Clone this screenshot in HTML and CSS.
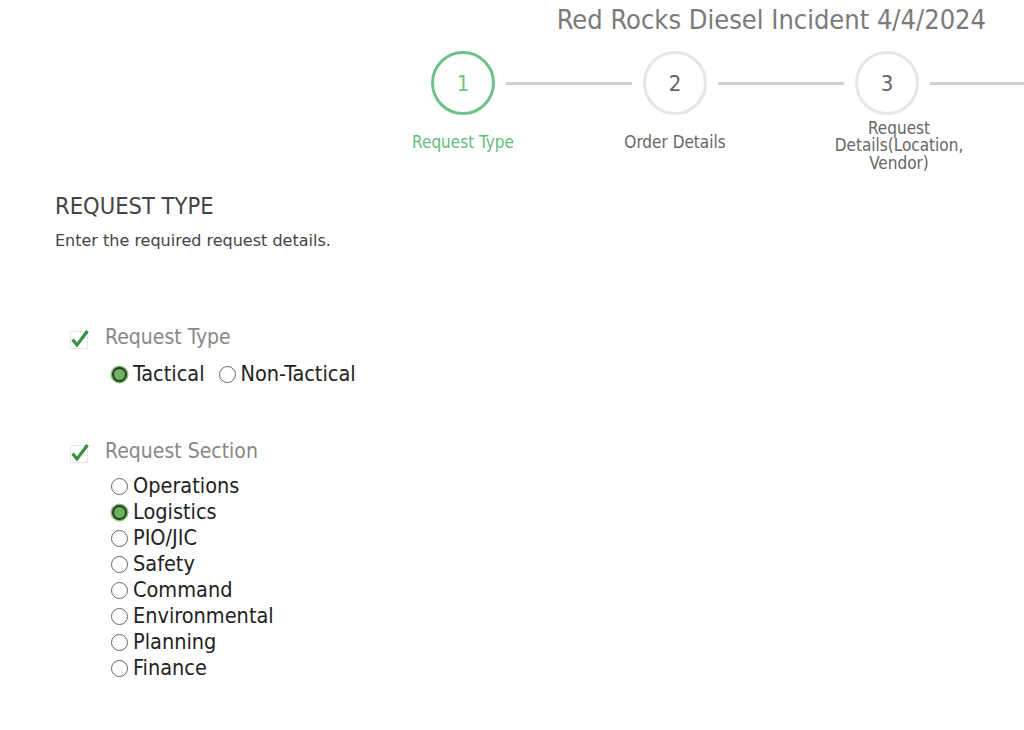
FILE: index.html
```html
<!DOCTYPE html>
<html lang="en">
<head>
<meta charset="utf-8">
<title>Request Type</title>
<link rel="stylesheet" href="styles.css">
</head>
<body>
<div class="page">
  <header class="header">
    <h1 class="title">Red Rocks Diesel Incident 4/4/2024</h1>
  </header>
  <nav class="stepper">
    <div class="step active">
      <div class="step-top"><span class="line hidden"></span><span class="circle">1</span><span class="line"></span></div>
      <div class="step-label">Request Type</div>
    </div>
    <div class="step">
      <div class="step-top"><span class="line"></span><span class="circle">2</span><span class="line"></span></div>
      <div class="step-label">Order Details</div>
    </div>
    <div class="step">
      <div class="step-top"><span class="line"></span><span class="circle">3</span><span class="line"></span></div>
      <div class="step-label multi">Request Details(Location, Vendor)</div>
    </div>
    <div class="tail"><span class="line"></span></div>
  </nav>

  <section class="section">
    <h2 class="section-title">REQUEST TYPE</h2>
    <p class="section-sub">Enter the required request details.</p>

    <div class="field first">
      <div class="field-label">
        <svg class="check" width="20" height="22" viewBox="0 0 20 22"><rect x="0.5" y="4.5" width="17" height="17" fill="none" stroke="#cfcfcf" stroke-width="1" stroke-dasharray="1 1"/><path d="M2.5 12.5 L7 18 L17.5 4" fill="none" stroke="#3d8f3d" stroke-width="3.2" stroke-linejoin="miter" stroke-linecap="butt"/></svg>
        <span>Request Type</span>
      </div>
      <div class="options inline">
        <label class="opt"><span class="radio on"></span>Tactical</label>
        <label class="opt"><span class="radio"></span>Non-Tactical</label>
      </div>
    </div>

    <div class="field">
      <div class="field-label">
        <svg class="check" width="20" height="22" viewBox="0 0 20 22"><rect x="0.5" y="4.5" width="17" height="17" fill="none" stroke="#cfcfcf" stroke-width="1" stroke-dasharray="1 1"/><path d="M2.5 12.5 L7 18 L17.5 4" fill="none" stroke="#3d8f3d" stroke-width="3.2" stroke-linejoin="miter" stroke-linecap="butt"/></svg>
        <span>Request Section</span>
      </div>
      <div class="options stack">
        <label class="opt"><span class="radio"></span>Operations</label>
        <label class="opt"><span class="radio on"></span>Logistics</label>
        <label class="opt"><span class="radio"></span>PIO/JIC</label>
        <label class="opt"><span class="radio"></span>Safety</label>
        <label class="opt"><span class="radio"></span>Command</label>
        <label class="opt"><span class="radio"></span>Environmental</label>
        <label class="opt"><span class="radio"></span>Planning</label>
        <label class="opt"><span class="radio"></span>Finance</label>
      </div>
    </div>
  </section>
</div>
</body>
</html>
```

FILE: styles.css
```css
html, body {
  margin: 0;
  padding: 0;
  background: #ffffff;
}
body {
  font-family: "DejaVu Sans Condensed", "DejaVu Sans", sans-serif;
  color: #333;
  overflow: hidden;
  width: 1024px;
  height: 730px;
}
.page {
  width: 1024px;
}
.header {
  display: flex;
  justify-content: flex-end;
  padding: 4px 38px 0 0;
  height: 47px;
}
.title {
  margin: 0;
  font-size: 27px;
  font-weight: normal;
  color: #7a7a7a;
  line-height: 32px;
}
.stepper {
  display: flex;
  align-items: flex-start;
  padding-left: 357px;
}
.step {
  width: 212px;
  flex: none;
  display: flex;
  flex-direction: column;
  align-items: center;
}
.step-top {
  width: 100%;
  height: 64px;
  display: flex;
  align-items: center;
}
.tail {
  flex: 1;
  height: 64px;
  display: flex;
  align-items: center;
}
.line {
  flex: 1;
  height: 3px;
  background: #d0d0d0;
}
.line.hidden {
  visibility: hidden;
}
.circle {
  width: 58px;
  height: 58px;
  border: 3px solid #e6e6e6;
  border-radius: 50%;
  margin: 0 11px;
  display: flex;
  align-items: center;
  justify-content: center;
  font-size: 22px;
  color: #666;
  flex: none;
}
.step.active .circle {
  border-color: #6cc28a;
  color: #6cc28a;
}
.step-label {
  height: 52px;
  margin-top: 1px;
  width: 150px;
  display: flex;
  align-items: center;
  justify-content: center;
  text-align: center;
  font-size: 17px;
  line-height: 17px;
  color: #666;
}
.step-label.multi {
  height: 44px;
  padding: 8px 0 0 24px;
  line-height: 17.3px;
}
.step.active .step-label {
  color: #66bb80;
}
.section {
  padding-left: 55px;
  margin-top: 24px;
}
.section-title {
  margin: 0;
  font-size: 23.5px;
  font-weight: normal;
  color: #444;
  line-height: 28px;
}
.section-sub {
  margin: 11px 0 0;
  font-family: "DejaVu Sans", sans-serif;
  font-size: 16px;
  color: #444;
  line-height: 20px;
}
.field {
  padding-left: 15px;
  margin-top: 51px;
}
.field.first {
  margin-top: 73px;
}
.field-label {
  display: flex;
  align-items: center;
  gap: 15px;
  font-size: 21px;
  color: #888;
  line-height: 26px;
}
.check {
  flex: none;
  margin-top: 2px;
}
.options {
  padding-left: 41px;
  margin-top: 11px;
  font-size: 21.5px;
  color: #222;
}
.options.inline {
  display: flex;
  gap: 14px;
}
.options.stack {
  display: flex;
  flex-direction: column;
  margin-top: 9px;
}
.opt {
  display: flex;
  align-items: center;
  gap: 5px;
  line-height: 26px;
}
.radio {
  width: 15px;
  height: 15px;
  border: 1px solid #666;
  border-radius: 50%;
  background: #fff;
  flex: none;
  box-sizing: content-box;
}
.radio.on {
  width: 11px;
  height: 11px;
  background: #6ab35a;
  border: 2px solid #333;
  box-shadow: 0 0 0 1.5px #7cc46a;
  margin: 1px;
}
```
